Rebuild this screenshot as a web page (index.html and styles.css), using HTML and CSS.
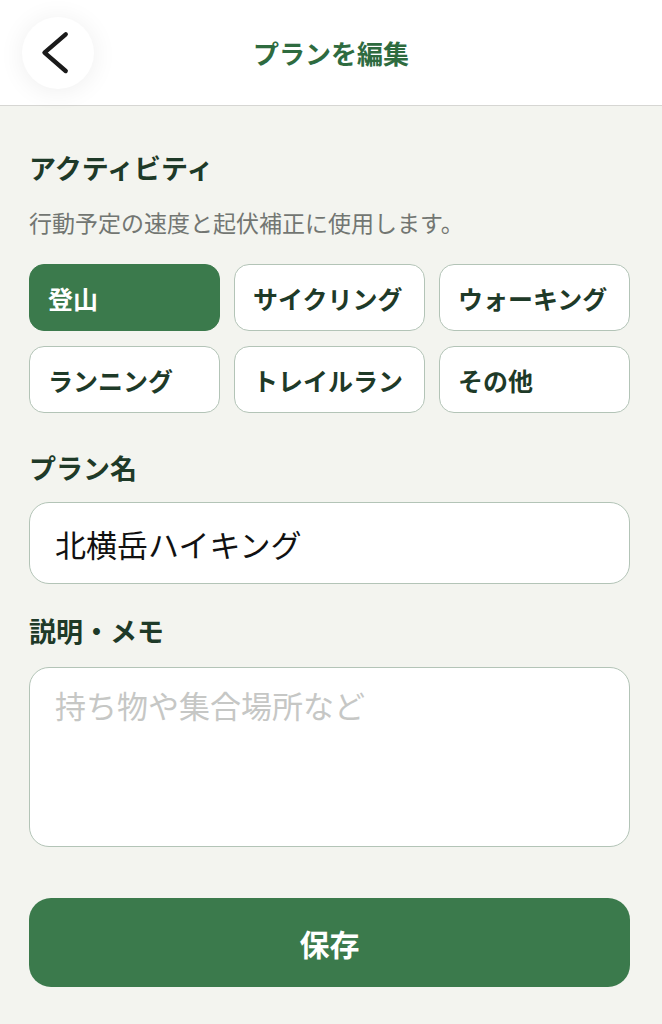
FILE: index.html
```html
<!DOCTYPE html>
<html lang="ja">
<head>
<meta charset="utf-8">
<title>プランを編集</title>
<link rel="stylesheet" href="styles.css">
</head>
<body>
<header class="topbar">
  <button class="back" aria-label="戻る">
    <svg viewBox="0 0 72 72" width="72" height="72"><path d="M43.7 17.3 L22.5 35.6 L43.7 54" fill="none" stroke="#1a1a1a" stroke-width="4.4" stroke-linecap="round" stroke-linejoin="round"/></svg>
  </button>
  <h1 class="title">プランを編集</h1>
  <span class="spacer"></span>
</header>
<main class="content">
  <h2 class="label">アクティビティ</h2>
  <p class="hint">行動予定の速度と起伏補正に使用します。</p>
  <div class="chips">
    <button class="chip chip-active">登山</button>
    <button class="chip">サイクリング</button>
    <button class="chip">ウォーキング</button>
    <button class="chip">ランニング</button>
    <button class="chip">トレイルラン</button>
    <button class="chip">その他</button>
  </div>
  <h2 class="label label-field">プラン名</h2>
  <input class="field" type="text" value="北横岳ハイキング">
  <h2 class="label label-memo">説明・メモ</h2>
  <textarea class="field memo" placeholder="持ち物や集合場所など"></textarea>
  <button class="save">保存</button>
</main>
</body>
</html>
```
FILE: styles.css
```css
* { box-sizing: border-box; }
html, body { margin: 0; padding: 0; }
body {
  background: #f3f4ef;
  font-family: "Noto Sans CJK JP", "Noto Sans", sans-serif;
  color: #1e3a28;
  min-height: 1024px;
}
.topbar {
  background: #ffffff;
  border-bottom: 1px solid #d6d6d3;
  display: grid;
  grid-template-columns: 1fr auto 1fr;
  align-items: center;
  padding: 17px 22px 16px 22px;
}
.back {
  width: 72px;
  height: 72px;
  border-radius: 50%;
  border: none;
  padding: 0;
  background: #ffffff;
  box-shadow: 0 2px 26px rgba(0, 0, 0, 0.07);
  display: block;
}
.back svg { display: block; }
.title {
  margin: 0;
  font-size: 26px;
  font-weight: 700;
  line-height: 36px;
  color: #2e6b3f;
  text-align: center;
}
.content {
  padding: 44px 32px 0 29px;
}
.label {
  margin: 0;
  font-size: 27px;
  line-height: 36px;
  font-weight: 700;
  color: #1e3a28;
}
.hint {
  margin: 21px 0 0 0;
  font-size: 23px;
  line-height: 30px;
  color: #727672;
}
.chips {
  margin-top: 27px;
  display: grid;
  grid-template-columns: repeat(3, 1fr);
  gap: 15px 14px;
}
.chip {
  height: 67px;
  border: 1.5px solid #b3c4b7;
  border-radius: 15px;
  background: #ffffff;
  display: flex;
  align-items: center;
  padding: 0 0 0 18px;
  font-family: inherit;
  font-size: 25px;
  font-weight: 700;
  color: #1e3a28;
  text-align: left;
}
.chip-active {
  background: #3b7a4c;
  border-color: #3b7a4c;
  color: #ffffff;
}
.label-field { margin-top: 37px; }
.label-memo { margin-top: 29px; }
.field {
  display: block;
  width: 100%;
  margin-top: 16px;
  height: 82px;
  border: 1.5px solid #b3c4b7;
  border-radius: 20px;
  background: #ffffff;
  padding: 0 25px;
  font-family: inherit;
  font-size: 31px;
  color: #111111;
  outline: none;
}
.memo {
  margin-top: 18px;
  height: 180px;
  padding: 17px 25px;
  line-height: 40px;
  resize: none;
}
.memo::placeholder { color: #c6c7c5; }
.save {
  display: block;
  width: 100%;
  margin-top: 51px;
  height: 89px;
  border: none;
  border-radius: 22px;
  background: #3b7a4c;
  color: #ffffff;
  font-family: inherit;
  font-size: 30px;
  font-weight: 700;
}
```
